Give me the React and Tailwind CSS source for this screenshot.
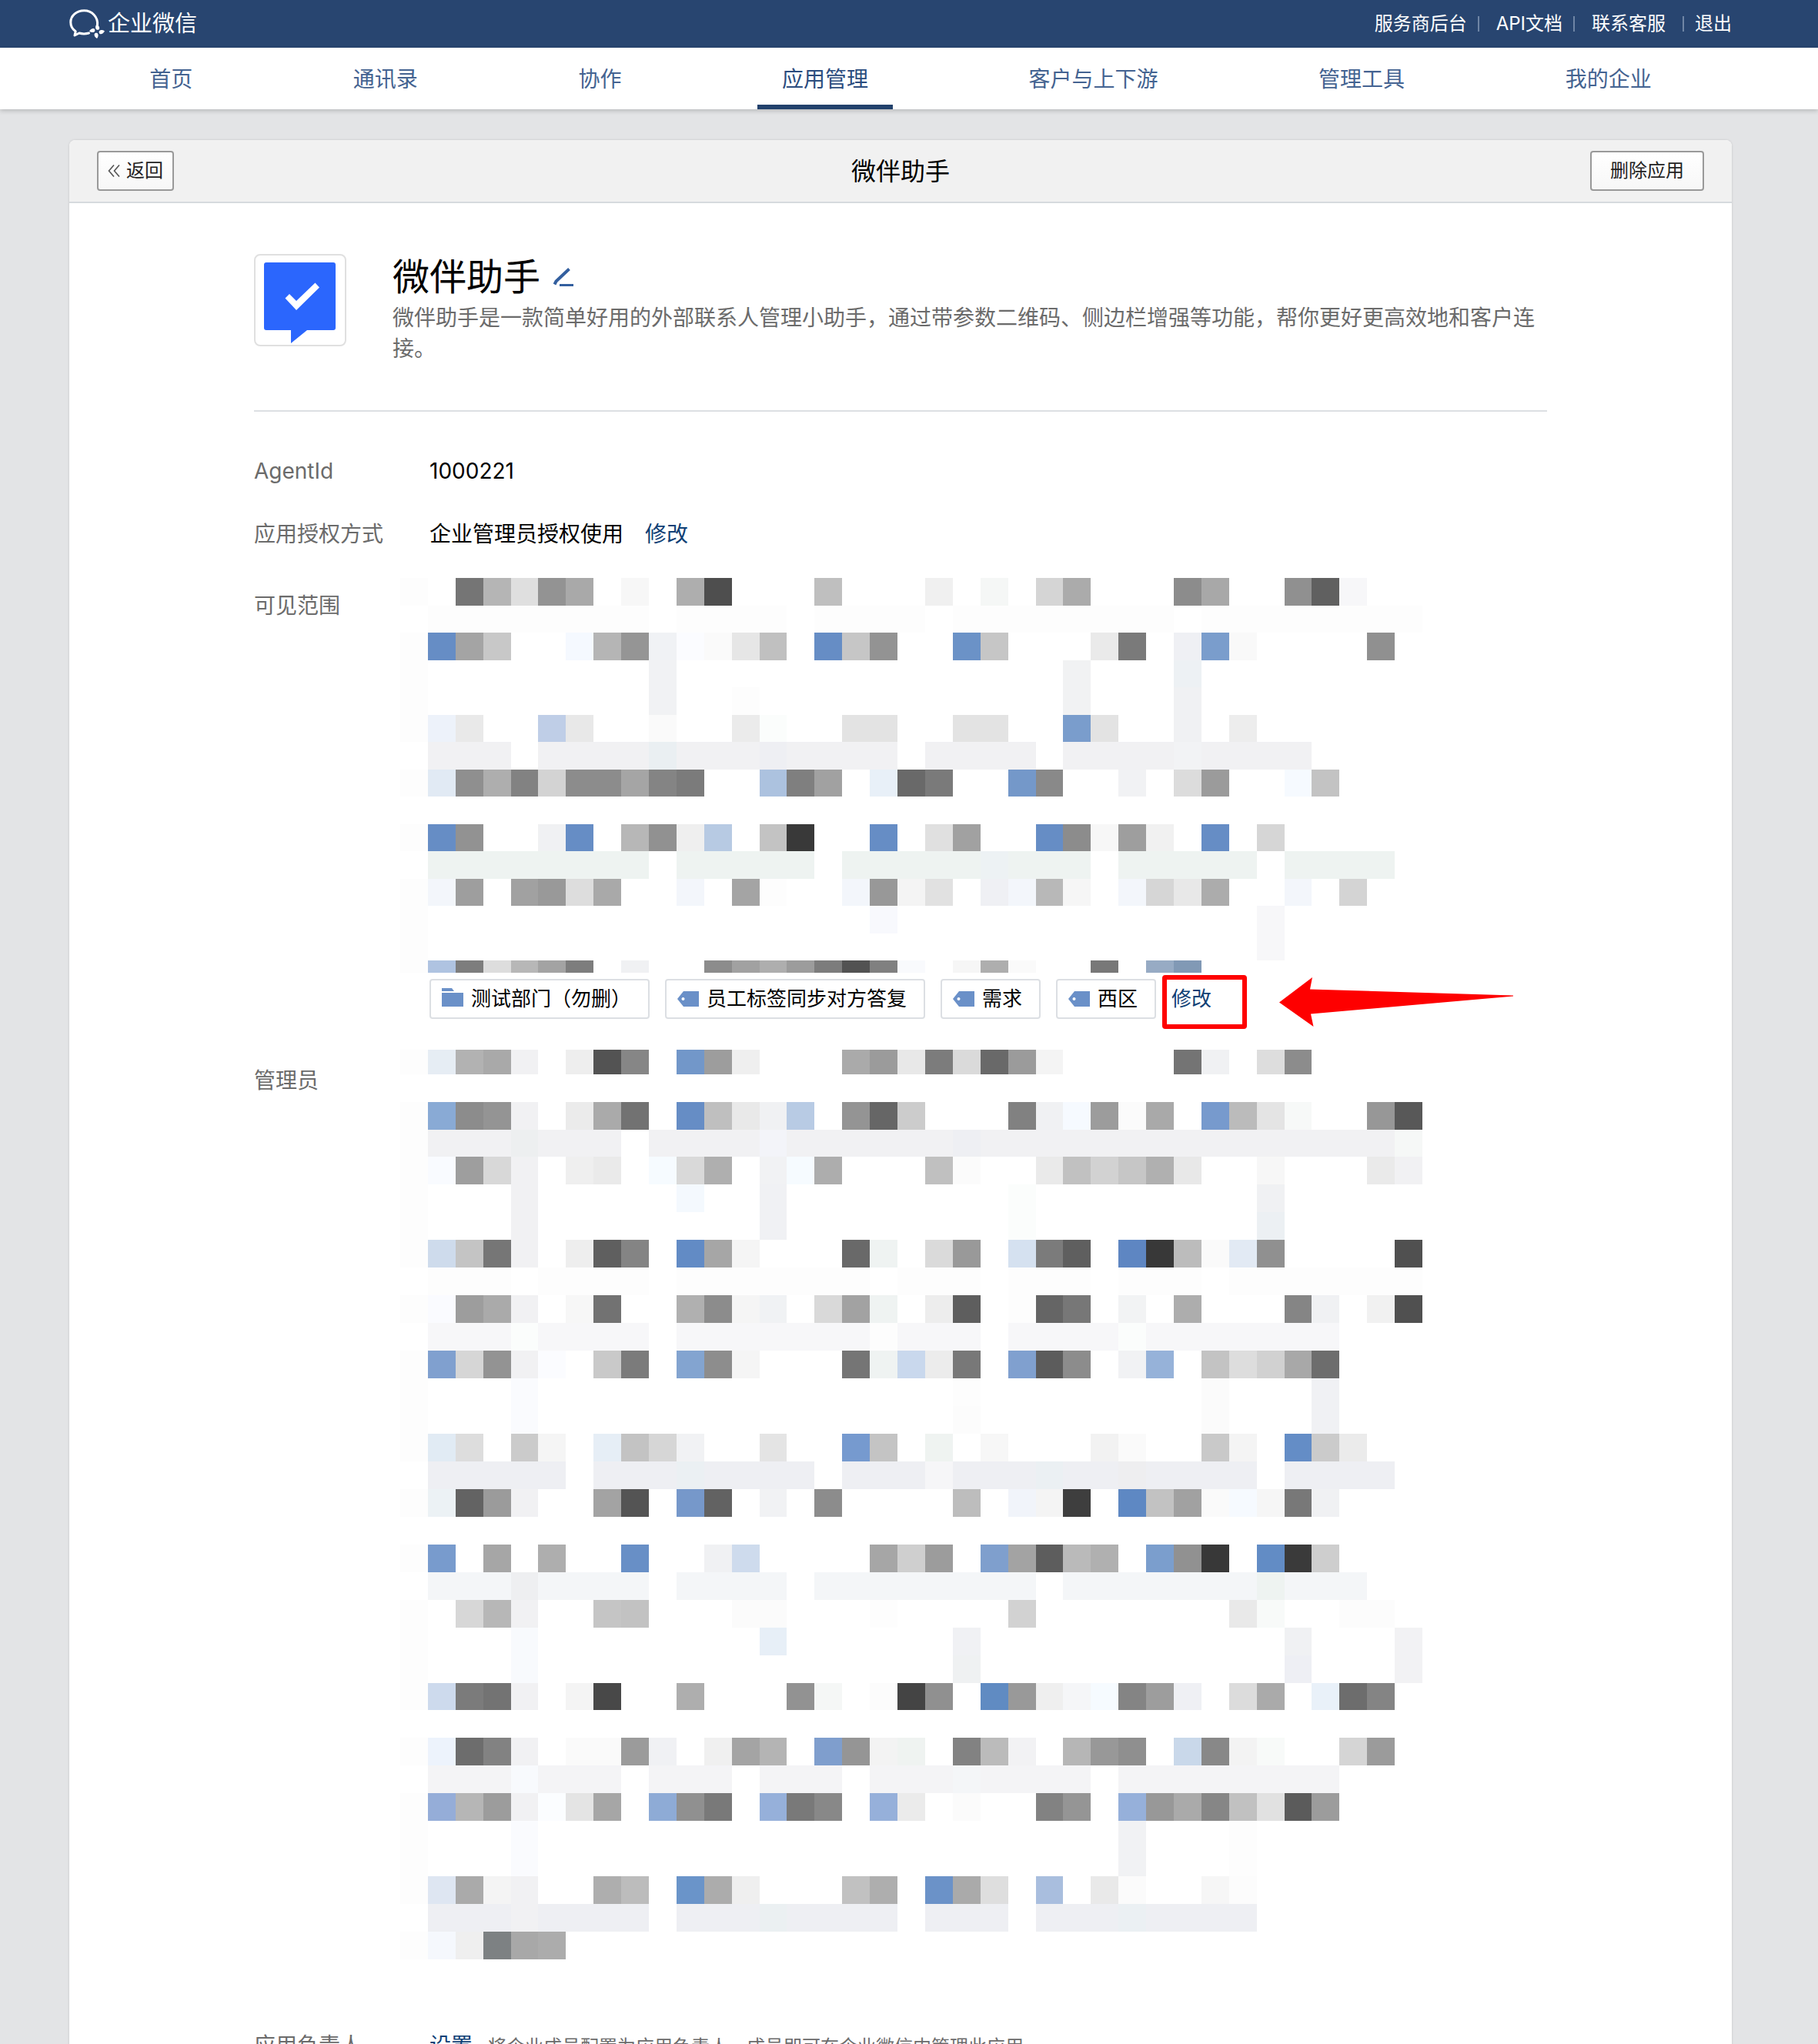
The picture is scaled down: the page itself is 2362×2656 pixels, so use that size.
const NAV = ['首页', '通讯录', '协作', '应用管理', '客户与上下游', '管理工具', '我的企业'];
const ACTIVE = '应用管理';

const TOP_LINKS = ['服务商后台', 'API文档', '联系客服', '退出'];

const TAGS = [
  { text: '测试部门（勿删）', type: 'folder' },
  { text: '员工标签同步对方答复', type: 'tag' },
  { text: '需求', type: 'tag' },
  { text: '西区', type: 'tag' },
];

// Each row is a list of blocks: column[+span]:color. Two digits are a grey level.
const SCOPE_ROWS = [
  '0:fd 2:75 3:b5 4:df 5:93 6:a9 8:f7 10:ae 11:4e 15:bf 19:f0 21:f5f7f6 23:d5 24:ab 28:8c 29:a8 32:90 33:60 34:f7f7f9',
  '1+8:fd 10+4:fd 15+4:fd 20+8:fd 29+8:fd',
  '0:fd 1:668dc5 2:a4 3:c8 6:f5f9ff 7:b5 8:95 9:f0f2f5 10:fbfcff 11:fa 12:e6 13:c0 15:668dc5 16:c6 17:93 20:6b92c7 21:c6 25:ea 26:7a 28:eff0f4 29:7a9dcc 30:f9 35:90',
  '0:fd 9:f1f2f4 24:f1f2f3 28:edf1f4',
  '0:fd 9:f1f2f4 12:fd 24:f1f2f3 28:f0f1f3',
  '0:fd 1:edf2fa 2:e9 5:bfcee7 6:e8 9:fa 12:eb 13:fbfdfc 16+2:e3 20+2:e3 24:7a9dcc 25:e3 28:f0f1f3 30:ed',
  '1+3:f1f1f3 5+13:f1f1f3 9:eaeff2 13:eeeff3 19+4:f1f1f3 24+9:f1f1f3 28:f2f3f5',
  '0:fd 1:e1eaf4 2:8f 3:ae 4:82 5:d3 6+2:8c 8:a5 9:84 10:7b 13:acc2df 14:7f 15:a1 17:e8f0f8 18:69 19:7a 22:7498c9 23:89 26:f1f2f4 28:dc 29:9b 32:f6faff 33:c3',
  '',
  '0:fd 1:668dc5 2:92 5:f0f1f3 6:668dc5 8:b7 9:91 10:ef 11:b7cae3 13:c3 14:39 17:668dc5 19:e0 20:a1 23:668dc5 24:8c 25:f7 26:9e 27:f1 29:668dc5 31:d6',
  '1+8:eef3f1 10+5:eef3f1 16+9:eef3f1 21:edf2f4 26+5:eef3f1 32+4:eef3f1',
  '0:fd 1:f3f6fb 2:9e 4:a1 5:99 6:dd 7:a9 10:f3f6fb 12:a4 13:fd 16:f3f6fb 17:98 18:f4 19:e1 21:eff0f4 22:f3f6fb 23:b8 24:f6 26:f3f6fb 27:d6 28:e8 29:ac 32:f3f6fb 34:d4',
  '0:fd 17:f8f9fd 31:f7f7f9',
  '0:fd 31:f7f7f9',
  '0:fd 1:afc3e1 2:7d 3:dd 4:b7 5:a3 6:7d 8:f0f1f3 11:8c 12:a1 13:ae 14:9c 15:7c 16:52 17:80 18:f9fafd 20:f6 21:ae 22:fa 25:78 27:97abc4 28:8199b5',
];

const ADMIN_ROWS = [
  '0:fd 1:e6edf4 2:b2 3:a9 4:f1f1f3 6:ee 7:53 8:86 10:7297c9 11:9d 12:ef 16:aa 17:9b 18:e8 19:7c 20:da 21:69 22:9b 23:f4 28:74 29:f0f1f3 31:dd 32:8c',
  '',
  '0:fd 1:89aad5 2:8c 3:94 4:f1f1f3 6:eb 7:aa 8:72 10:668dc5 11:bf 12:e9 13:f0f1f3 14:b8cbe4 16:94 17:66 18:cc 22:81 23:f0f1f3 24:f6faff 25:9c 26:fb 27:a9 29:779acd 30:bb 31:e4 32:f7f9f8 35:97 36:58',
  '0:fd 1+7:f1f1f3 4:edeff0 9+27:f1f1f3 13:f3f4f9 20:eeeff3 36:f6f8f7',
  '0:fd 1:f9fbff 2:9e 3:d8 4:f1f1f3 6:ef 7:ea 9:f6fbff 10:d9 11:af 13:f1f2f4 14:f6fbff 15:ad 19:c0 20:fb 23:ea 24:c1 25:d2 26:c6 27:b0 28:e8 31:f7 35:ea 36:f1f1f3',
  '0:fd 4:f1f1f3 10:f4f9fe 13:f0f1f4 22:fbfdfc 31:f0f1f3',
  '0:fd 4:f1f1f3 13:f0f1f4 22:fbfdfc 31:ecf0f3',
  '0:fd 1:cedbec 2:c4 3:76 4:f1f1f3 6:ee 7:5f 8:84 10:628bc5 11:a6 12:f5 16:69 17:eff3f2 19:da 20:99 22:d5e1f0 23:7b 24:5f 26:5e86c2 27:38 28:bc 29:fa 30:e2eaf4 31:90 36:50',
  '1+3:fd 5+4:fd 10+7:fd 18+3:fd 22+3:fd 26+3:fd 30+7:fd',
  '0:fd 1:fafbff 2:9d 3:aa 4:f1f1f3 6:f7 7:72 10:b0 11:8c 12:f5 13:f0f2f4 15:d9 16:a2 17:eff3f2 19:ed 20:5e 22:fd 23:65 24:77 26:f2f3f4 28:ad 32:85 33:f0f1f3 35:f1 36:50',
  '1+3:f7f7f9 4:fbfdfc 5+4:f7f7f9 10+7:f7f7f9 17:fd 18+3:f7f7f9 22+4:f7f7f9 26:fbfdfc 27+7:f7f7f9',
  '0:fd 1:80a0cf 2:d6 3:93 4:f1f1f3 5:fbfcff 7:c9 8:7b 10:83a4d0 11:8d 12:f5 16:75 17:eff3f2 18:c9d8ed 19:ec 20:78 22:80a0cf 23:5c 24:8c 26:f1f2f4 27:96b2d9 29:c3 30:dd 31:d1 32:a8 33:6d',
  '0:fd 4:fafbfe 20:fd 29:fb 33:f0f1f4',
  '0:fd 4:fafbfe 20:fc 29:fb 33:f0f1f4',
  '0:fd 1:e1ebf4 2:dd 4:cb 5:f5 7:e6eef6 8:c3 9:d6 10:f1f2f4 13:e4 16:769acf 17:c4 19:eff3f1 21:f7 25:f2 26:fa 29:c9 30:f4 32:648dc6 33:cb 34:eb',
  '1+5:eeeff3 7+8:eeeff3 10:ebf0f3 16+15:eeeff3 19:f6f6f8 23:ebf0f3 26:eeeef0 32+4:eeeff3',
  '0:fd 1:ecf2f5 2:63 3:9b 4:f1f1f3 7:a3 8:54 10:7698ca 11:62 13:f1f2f4 15:8c 20:bd 22:f1f4fa 23:f4 24:3e 26:5e88c3 27:c2 28:a1 29:fa 30:f6faff 31:f6 32:78 33:f0f1f3',
  '',
  '0:fd 1:789bcd 3:a6 5:ae 8:688fc6 11:f0f1f3 12:cedbed 17:a6 18:cf 19:9c 21:7f9fcd 22:a3 23:5d 24:ba 25:b0 27:7b9ecd 28:91 29:38 31:628cc5 32:3a 33:ce',
  '1+8:f4f6f8 4:eeeff1 10+4:f4f6f8 15+8:f4f6f8 24+11:f4f6f8 31:eef3f1',
  '0:fd 2:d7 3:b7 4:f1f1f3 7:c5 8:c2 12+2:fb 17:fd 22:d2 30:e9 31:f8faf9 34+2:fc',
  '0:fd 4:f8fafd 13:e7eff7 20:f0f1f4 32:f0f1f3 36:f2f2f4',
  '0:fd 4:f8fafd 20:eff1f2 32:eeeff4 36:f2f2f4',
  '0:fd 1:cddaed 2:7b 3:73 4:f1f1f3 6:f4 7:48 10:ae 14:92 15:f5f7f6 17:fc 18:44 19:90 21:608bc2 22:99 23:ef 24:f5f6f8 25:f6fbff 26:84 27:9d 28:eff0f4 30:dc 31:aa 33:e9f1f9 34:6d 35:84',
  '',
  '0:fd 1:edf3fc 2:6d 3:82 4:f1f1f3 6+2:fa 8:9b 9:f0f1f4 11:f0 12:a4 13:b4 15:7f9ecd 16:95 17:f3 18:eff3f1 20:82 21:bb 22:f2f2f4 24:b6 25:98 26:8f 28:c9d8ea 29:88 30:f3 31:f8faf9 34:d5 35:9b',
  '1+3:f4f4f6 4:f8fafd 5+3:f4f4f6 9+3:f4f4f6 13+3:f4f4f6 17+8:f4f4f6 20:f4f6f8 26+8:f4f4f6',
  '0:fd 1:95add8 2:b6 3:9c 4:f1f1f3 5:fbfdff 6:e4 7:a6 9:8eabd6 10:90 11:79 13:96b0da 14:79 15:88 17:96b0da 18:eb 20:fb 23:82 24:95 26:96b0da 27:98 28:aa 29:86 30:c1 31:e1 32:5b 33:9c',
  '0:fd 4:fafbfe 26:f1f2f4 30:fd',
  '0:fd 4:fafbfe 26:f1f2f4 30:fd',
  '0:fd 1:dee6f2 2:aa 3:f4 4:f1f1f3 7:ae 8:bc 10:6a94c9 11:ac 12:ef 16:c1 17:ae 19:6b92c8 20:aa 21:de 23:a9bede 25:e9 26:fb 29:f6 30:fc',
  '1+8:eeeff3 4:f1f1f3 10+8:eeeff3 13:ebf0f2 19+3:eeeff3 23+8:eeeff3 26:ebf0f3',
  '0:fd 1:f5f8fd 2:ef 3:7d8183 4:a8 5:ac',
];

function parseRow(row) {
  return row.split(' ').filter(Boolean).map(part => {
    const [pos, color] = part.split(':');
    const [col, span = '1'] = pos.split('+');
    return {
      col: Number(col),
      span: Number(span),
      fill: color.length === 2 ? `#${color}${color}${color}` : `#${color}`,
    };
  });
}

function Mosaic({ rows, viewBox, className }) {
  return (
    <svg className={className} viewBox={viewBox} preserveAspectRatio="none" shapeRendering="crispEdges" aria-hidden="true">
      {rows.map((row, y) => parseRow(row).map(b => (
        <rect key={`${y}-${b.col}`} x={b.col} y={y} width={b.span} height={1} fill={b.fill} />
      )))}
    </svg>
  );
}

function Logo() {
  return (
    <svg width="46" height="38" viewBox="0 0 46 38" fill="none" aria-hidden="true">
      <path
        d="M36.5 20.5 C37.5 10 29.5 1.8 19.3 1.8 C9.5 1.8 1.8 8.5 1.8 17 C1.8 22 4.3 26 8.2 28.8 L7 34 L13 31 C17 32.2 21 32.2 25.5 31"
        stroke="#fff" strokeWidth="3" strokeLinecap="round" strokeLinejoin="round"
      />
      <g fill="#fff">
        <path d="M35.5 19.5 C38 21 39.5 23 39.2 25 C38.8 27.3 35.5 27.5 34.5 25.5 C33.7 23.5 34 21.5 35.5 19.5Z" />
        <path d="M46 28.5 C44.5 31 42.5 32.5 40.5 32.2 C38.2 31.8 38 28.5 40 27.5 C42 26.7 44 27 46 28.5Z" />
        <path d="M36 38 C33.5 36.5 32.3 34.5 32.6 32.5 C33 30.3 36.3 30 37.2 32 C38 34 37.6 36 36 38Z" />
        <path d="M26 28.5 C27.5 26 29.5 24.8 31.5 25 C33.8 25.5 34 28.8 32 29.7 C30 30.5 28 30 26 28.5Z" />
      </g>
    </svg>
  );
}

function AppIcon() {
  return (
    <svg width="116" height="116" viewBox="0 0 116 116" aria-hidden="true">
      <path d="M14 9 H101 Q104 9 104 12 V94 Q104 97 101 97 H67 L46 114 V97 H14 Q11 97 11 94 V12 Q11 9 14 9Z" fill="#2b66fd" />
      <path d="M38.5 55.5 L44 50 L53 59 L77.5 35.5 L83 41.5 L53 71Z" fill="#fff" />
    </svg>
  );
}

function FolderIcon() {
  return (
    <svg width="28" height="24" viewBox="0 0 28 24" fill="#6a90c8" className="-mt-1" aria-hidden="true">
      <path d="M0 0 H13 L16 4 H0Z" />
      <rect y="6" width="28" height="18" />
    </svg>
  );
}

function TagIcon() {
  return (
    <svg width="28" height="20" viewBox="0 0 28 20" fill="#6a90c8" aria-hidden="true">
      <path fillRule="evenodd" d="M8 0 H28 V20 H8 L0 10Z M7.5 8 a2 2 0 1 0 0.01 0Z" />
    </svg>
  );
}

function Row({ label, className, labelClass, children }) {
  return (
    <div className={`flex ${className}`}>
      <dt className={`w-[228px] shrink-0 text-[#6b6b6b] ${labelClass || ''}`}>{label}</dt>
      <dd className="min-w-0 flex-1">{children}</dd>
    </div>
  );
}

export default function App() {
  return (
    <div className="min-h-screen bg-[#e3e4e6] text-[28px] leading-10 text-black [font-family:Inter,'Noto_Sans_CJK_SC',sans-serif]">
      <header>
        <div className="bg-[#284570] pr-[22px] text-white">
          <div className="mx-auto flex h-[62px] max-w-[2160px] items-center justify-between">
            <a href="#" className="flex items-center gap-1">
              <Logo />
              <span className="text-[29px]">企业微信</span>
            </a>
            <div className="flex items-center text-2xl">
              {TOP_LINKS.map((text, i) => (
                <span key={text} className="group flex items-center">
                  {i > 0 && (
                    <span className="ml-3.5 mr-[22px] h-5 w-0.5 bg-[#6f85a5] group-last:ml-[22px] group-last:mr-3.5" />
                  )}
                  <a href="#">{text}</a>
                </span>
              ))}
            </div>
          </div>
        </div>
        <div className="relative bg-white pr-[22px] shadow-[0_2px_6px_rgba(0,0,0,0.2)]">
          <nav className="mx-auto flex h-20 max-w-[2160px] justify-around">
            {NAV.map(text => (
              <a
                key={text}
                href="#"
                className={`flex items-center border-b-6 px-8 pt-2 ${
                  text === ACTIVE ? 'border-[#22416c] text-[#2b4c7e]' : 'border-transparent text-[#446391]'
                }`}
              >
                {text}
              </a>
            ))}
          </nav>
        </div>
      </header>

      <div className="pr-[22px] pt-10">
        <main className="mx-auto max-w-[2160px] rounded-t-lg bg-white shadow-[0_0_3px_rgba(0,0,0,0.15)]">
          <div className="flex h-[82px] items-center justify-between rounded-t-lg border-b-2 border-[#d6dade] bg-[#f1f1f1] px-9">
            <div className="flex flex-1">
              <button className="flex h-[52px] items-center gap-2 rounded border-2 border-[#999] bg-linear-to-b from-white to-[#f7f7f7] px-3 text-2xl text-[#222]">
                <svg width="16" height="16" viewBox="0 0 16 16" fill="none" stroke="#555" strokeWidth="1.6" aria-hidden="true">
                  <path d="M8 0.5 L1.5 8 L8 15.5 M15 0.5 L8.5 8 L15 15.5" />
                </svg>
                返回
              </button>
            </div>
            <h1 className="pt-0.5 text-[32px]">微伴助手</h1>
            <div className="flex flex-1 justify-end">
              <button className="h-[52px] rounded border-2 border-[#999] bg-linear-to-b from-white to-[#f7f7f7] px-6 text-2xl text-[#222]">
                删除应用
              </button>
            </div>
          </div>

          <div className="px-60 pb-14 pt-[66px]">
            <section className="flex gap-[60px] border-b-2 border-[#dcdfe3] pb-[60px]">
              <div className="h-[120px] w-[120px] shrink-0 rounded-lg border-2 border-[#e0e0e0]">
                <AppIcon />
              </div>
              <div>
                <div className="mb-1 flex h-[59px] items-center gap-4">
                  <h2 className="text-5xl">微伴助手</h2>
                  <button aria-label="修改">
                    <svg width="28" height="24" viewBox="0 0 28 24" fill="none" stroke="#335f9f" aria-hidden="true">
                      <path d="M2.5 21.5 L4.5 17.5 L21.5 1.5" strokeWidth="4" />
                      <path d="M9 22.5 H27" strokeWidth="3" />
                    </svg>
                  </button>
                </div>
                <p className="text-[#6b6b6b]">
                  微伴助手是一款简单好用的外部联系人管理小助手，通过带参数二维码、侧边栏增强等功能，帮你更好更高效地和客户连接。
                </p>
              </div>
            </section>

            <dl>
              <Row label="AgentId" className="mt-[57px]">1000221</Row>
              <Row label="应用授权方式" className="mt-[42px]">
                企业管理员授权使用
                <a href="#" className="ml-7 text-[#0f4075]">修改</a>
              </Row>
              <Row label="可见范围" className="mt-[37px]" labelClass="pt-4">
                <Mosaic rows={SCOPE_ROWS} viewBox="0 0 37 14.45" className="-ml-[38px] h-[513px] w-[1328px]" />
                <div className="mt-2 flex items-center gap-5 text-[26px]">
                  {TAGS.map(tag => (
                    <span key={tag.text} className="flex h-[52px] items-center gap-2.5 rounded border-2 border-[#dcdfe3] pl-3.5 pr-[22px]">
                      {tag.type === 'folder' ? <FolderIcon /> : <TagIcon />}
                      {tag.text}
                    </span>
                  ))}
                  <div className="relative">
                    <a href="#" className="text-[#0f4075]">修改</a>
                    {/* callout: red frame and arrow pointing at the link */}
                    <div className="pointer-events-none absolute -left-3 -top-[11px] flex items-center gap-[42px]">
                      <div className="h-[70px] w-[110px] rounded border-6 border-[#fe0000]" />
                      <svg width="304" height="64" viewBox="0 0 304 64" fill="#fe0000" aria-hidden="true">
                        <path d="M0 32.5 L43 0 L40 15.5 L304 23.5 V24.5 L41 47.5 L44.5 64Z" />
                      </svg>
                    </div>
                  </div>
                </div>
              </Row>
              <Row label="管理员" className="mt-10" labelClass="pt-5">
                <Mosaic rows={ADMIN_ROWS} viewBox="0 0.12 37 32.88" className="-ml-[38px] h-[1182px] w-[1328px]" />
              </Row>
              <Row label="应用负责人" className="mt-[92px]">
                <a href="#" className="text-[#0f4075]">设置</a>
                <span className="ml-5 text-2xl text-[#6b6b6b]">将企业成员配置为应用负责人，成员即可在企业微信内管理此应用</span>
              </Row>
            </dl>
          </div>
        </main>
      </div>
    </div>
  );
}
